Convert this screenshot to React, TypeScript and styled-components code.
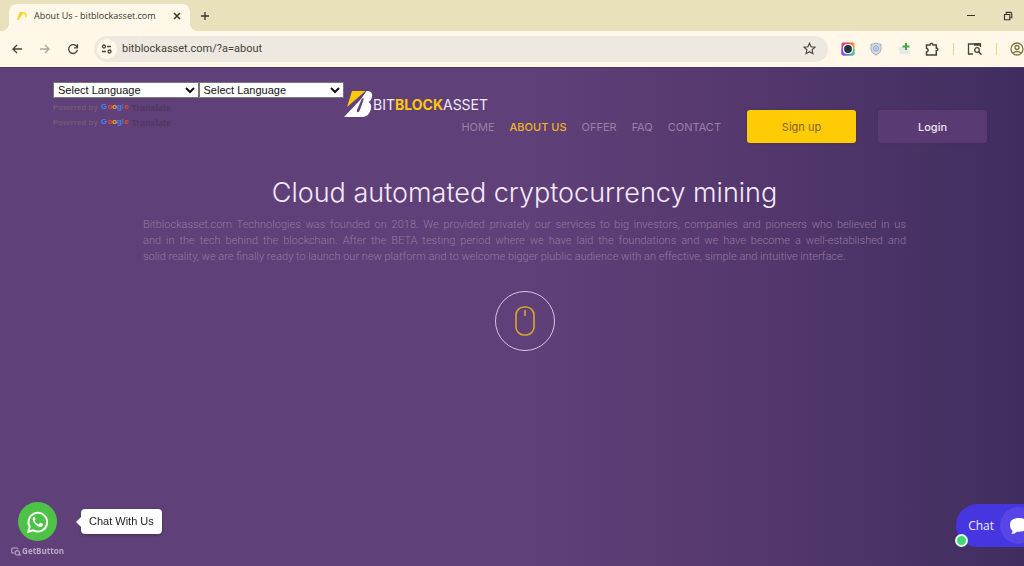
import React from "react";
import styled, { createGlobalStyle } from "styled-components";

const GlobalStyle = createGlobalStyle`
  *, *::before, *::after { box-sizing: border-box; }
  html, body, #root { height: 100%; }
  body { margin: 0; overflow: hidden; font-family: Inter, "Open Sans", sans-serif; }
  button { font: inherit; border: 0; padding: 0; background: none; color: inherit; cursor: pointer; }
  a { text-decoration: none; }
  h1, p { margin: 0; }
  svg { display: block; flex: none; }
`;

const Window = styled.div`
  min-height: 100%;
  display: flex;
  flex-direction: column;
`;

/* Browser chrome */
const TabStrip = styled.div`
  display: flex;
  align-items: flex-end;
  height: 31px;
  padding-left: 9px;
  background: #e9e1bb;
  color: #37352a;
  font-family: "Open Sans", sans-serif;
`;

const Tab = styled.div`
  position: relative;
  display: flex;
  align-items: center;
  width: 181px;
  height: 27px;
  padding: 0 9px 4px 8px;
  border-radius: 8px 8px 0 0;
  background: #fff8e8;
  font-size: 9px;

  &::before,
  &::after {
    content: "";
    position: absolute;
    bottom: 0;
    width: 8px;
    height: 8px;
  }
  &::before {
    left: -8px;
    background: radial-gradient(circle at 0 0, transparent 8px, #fff8e8 8px);
  }
  &::after {
    right: -8px;
    background: radial-gradient(circle at 100% 0, transparent 8px, #fff8e8 8px);
  }
`;

const TabTitle = styled.span`
  flex: 1;
  margin-left: 7px;
  white-space: nowrap;
`;

const NewTab = styled.button`
  margin: 0 auto 10px 10px;
`;

const WindowControls = styled.div`
  display: flex;
  gap: 27px;
  padding: 0 11px 10px 0;
`;

const Toolbar = styled.div`
  display: flex;
  align-items: center;
  height: 37px;
  padding: 0 0 1px 11px;
  border-bottom: 1px solid #4a3d5c;
  background: #fff8e8;
  color: #45433a;
  font-family: "Open Sans", sans-serif;
`;

const NavButtons = styled.div`
  display: flex;
  gap: 16px;
  margin-right: 15px;
`;

const AddressBar = styled.div`
  display: flex;
  flex: 1;
  align-items: center;
  height: 26px;
  padding: 0 12px 0 3px;
  border-radius: 13px;
  background: #ede8e0;
`;

const SiteInfo = styled.button`
  display: grid;
  place-items: center;
  width: 20px;
  height: 20px;
  border-radius: 50%;
  background: #fff8e8;
`;

const Address = styled.input`
  flex: 1;
  min-width: 0;
  padding: 0 0 0 5px;
  border: 0;
  outline: 0;
  background: none;
  color: #45433a;
  font: 11px Roboto, "Open Sans", sans-serif;
`;

const Extensions = styled.div`
  display: flex;
  align-items: center;
  gap: 14px;
  margin-left: 13px;
`;

const Divider = styled.span`
  width: 1px;
  height: 12px;
  margin-right: -1px;
  background: #e6d873;
`;

/* Site */
const Site = styled.div`
  flex: 1;
  background: linear-gradient(90deg, #5f4078 0%, #5f4078 52%, #56396f 70%, #463163 92%, #402d60 100%);
`;

const Header = styled.header`
  display: flex;
  padding: 14px 37px 0 53px;
`;

const Translate = styled.div`
  flex: none;
  width: 291px;
`;

const Selects = styled.div`
  display: flex;
  margin-bottom: 2px;
`;

const LanguageSelect = styled.select`
  flex: 1;
  min-width: 0;
  height: 16px;
  padding: 0;
  border: 1px solid #767676;
  border-radius: 0;
  background: #fff;
  color: #111;
  font: 11px "Liberation Sans", Arial, sans-serif;
`;

const Powered = styled.div`
  display: flex;
  align-items: center;
  gap: 3px;
  height: 15px;
  color: #745878;
  font: bold 8px "Liberation Sans", Arial, sans-serif;
`;

const Google = styled.span`
  margin-bottom: 2px;
`;

const Tint = styled.span<{ $c: string }>`
  color: ${(p) => p.$c};
`;

const TranslateWord = styled.span`
  color: #4e3960;
  font-size: 9px;
`;

const HeaderMain = styled.div`
  flex: 1;
  padding-top: 8px;
`;

const Logo = styled.a`
  display: flex;
  align-items: center;
  height: 28px;
  width: max-content;
  color: #f2eaf8;
  font-size: 14px;

  b { color: #ffc90a; font-weight: 700; }
`;

const Menu = styled.nav`
  display: flex;
  align-items: center;
  justify-content: flex-end;
  margin-top: -8px;
  white-space: nowrap;
`;

const MenuLink = styled.a<{ $active?: boolean }>`
  margin-right: 15px;
  color: ${(p) => (p.$active ? "#edb522" : "#9a80a6")};
  font-size: 11px;
  line-height: 16px;
  font-weight: ${(p) => (p.$active ? 500 : 400)};
`;

const ActionButton = styled.button<{ $primary?: boolean }>`
  width: 109px;
  height: 33px;
  margin-left: ${(p) => (p.$primary ? 11 : 22)}px;
  border-radius: 3px;
  background: ${(p) => (p.$primary ? "#ffcb05" : "#5a3a73")};
  color: ${(p) => (p.$primary ? "#80652a" : "#f0e6f5")};
  font-size: 11px;
  font-weight: ${(p) => (p.$primary ? 400 : 500)};
  box-shadow: 0 0 3px rgba(60, 30, 70, 0.3);
`;

const Hero = styled.main`
  display: flex;
  flex-direction: column;
  align-items: center;
  padding: 32px 118px 0 143px;
`;

const Title = styled.h1`
  color: #f4e9fa;
  font-size: 27px;
  font-weight: 300;
  line-height: 36px;
  white-space: nowrap;
`;

const Intro = styled.p`
  align-self: stretch;
  margin-top: 6px;
  color: #9478a1;
  font-family: Roboto, "Open Sans", sans-serif;
  font-size: 11px;
  font-weight: 300;
  line-height: 16px;
`;

const Line = styled.span<{ $last?: boolean }>`
  display: block;
  text-align: justify;
  text-align-last: ${(p) => (p.$last ? "left" : "justify")};
  white-space: nowrap;
`;

const ScrollHint = styled.button`
  display: grid;
  place-items: center;
  width: 60px;
  height: 60px;
  margin-top: 26px;
  border: 1px solid #d9c3e6;
  border-radius: 50%;
`;

/* Floating chat widgets */
const Messenger = styled.div`
  position: fixed;
  left: 12px;
  bottom: 9px;
  display: flex;
  align-items: flex-start;
  gap: 18px;
`;

const MessengerColumn = styled.div`
  display: flex;
  flex-direction: column;
  align-items: center;
  gap: 4px;
  width: 51px;
`;

const WhatsAppButton = styled.button`
  display: grid;
  place-items: center;
  width: 39px;
  height: 39px;
  border-radius: 50%;
  background: #4dc247;
`;

const Brand = styled.a`
  display: flex;
  align-items: center;
  gap: 1px;
  color: #bda9cb;
  font: bold 8px/12px "Open Sans", sans-serif;
`;

const Bubble = styled.div`
  position: relative;
  height: 25px;
  margin-top: 7px;
  padding: 0 8px;
  border-radius: 4px;
  background: #fff;
  color: #222;
  font: 11px/25px "Liberation Sans", Arial, sans-serif;
  box-shadow: 0 1px 3px rgba(0, 0, 0, 0.3);

  &::before {
    content: "";
    position: absolute;
    left: -5px;
    top: 8px;
    border: 5px solid transparent;
    border-left: 0;
    border-right-color: #fff;
  }
`;

const ChatButton = styled.button`
  position: fixed;
  right: -23px;
  bottom: 19px;
  display: flex;
  align-items: center;
  gap: 6px;
  height: 43px;
  padding: 0 10px 0 12px;
  border-radius: 22px;
  background: #4636e0;
  color: #f0edff;
  font: 12px "Open Sans", sans-serif;
`;

const ChatIcon = styled.span`
  display: grid;
  place-items: center;
  width: 37px;
  height: 37px;
  border-radius: 50%;
  background: #5745e6;
`;

const Online = styled.span`
  position: absolute;
  left: -1px;
  bottom: 0;
  width: 13px;
  height: 13px;
  border: 2px solid #e3f7ec;
  border-radius: 50%;
  background: #43d67b;
`;

const stroke = { fill: "none", stroke: "currentColor", strokeWidth: 1.3 } as const;

function PoweredBy() {
  return (
    <Powered>
      <span>Powered by</span>
      <Google>
        <Tint $c="#4285f4">G</Tint>
        <Tint $c="#ea4335">o</Tint>
        <Tint $c="#e8b020">o</Tint>
        <Tint $c="#4285f4">g</Tint>
        <Tint $c="#5a6f9e">l</Tint>
        <Tint $c="#ea4335">e</Tint>
      </Google>
      <TranslateWord>Translate</TranslateWord>
    </Powered>
  );
}

function Favicon() {
  return (
    <svg width="10" height="10" viewBox="0 0 10 10">
      <path d="M0 9 3 1h5q2 1 2 4l-2 2V4L6 3 2 9Z" fill="#f7df58" />
      <path d="m0 9 3-8h3L2 7Z" fill="#f5cf1e" />
    </svg>
  );
}

function BrowserChrome() {
  return (
    <>
      <TabStrip>
        <Tab>
          <Favicon />
          <TabTitle>About Us - bitblockasset.com</TabTitle>
          <button aria-label="Close tab">
            <svg width="8" height="8" viewBox="0 0 8 8" {...stroke} strokeWidth="1.5"><path d="m1 1 6 6M7 1 1 7" /></svg>
          </button>
        </Tab>
        <NewTab aria-label="New tab">
          <svg width="10" height="10" viewBox="0 0 10 10" {...stroke}><path d="M5 1v8M1 5h8" /></svg>
        </NewTab>
        <WindowControls>
          <button aria-label="Minimize">
            <svg width="10" height="10" viewBox="0 0 10 10" {...stroke} strokeWidth="1"><path d="M1 4.500h8" /></svg>
          </button>
          <button aria-label="Restore">
            <svg width="10" height="10" viewBox="0 0 10 10" {...stroke} strokeWidth="1.100">
              <path d="M1.500 3.500H6.800V8.800H1.500ZM3.300 3.300V1.400H7.200q1.600 0 1.600 1.600v3.700H7" />
            </svg>
          </button>
        </WindowControls>
      </TabStrip>
      <Toolbar>
        <NavButtons>
          <button aria-label="Back">
            <svg width="12" height="12" viewBox="0 0 12 12" {...stroke}><path d="M11 6H2M6 2 2 6l4 4" /></svg>
          </button>
          <button aria-label="Forward">
            <svg width="12" height="12" viewBox="0 0 12 12" {...stroke} stroke="#aaa79c"><path d="M1 6h9M6 2l4 4-4 4" /></svg>
          </button>
          <button aria-label="Reload">
            <svg width="12" height="12" viewBox="0 0 12 12" {...stroke}>
              <path d="M10 4A4.400 4.400 0 1 0 10.400 7" />
              <path d="M10.500 1.200v3.600H7" />
            </svg>
          </button>
        </NavButtons>
        <AddressBar>
          <SiteInfo aria-label="Site information">
            <svg width="12" height="10" viewBox="0 0 12 10" {...stroke}>
              <circle cx="3" cy="2.500" r="1.500" /><path d="M6 2.500h4M1 7.500h4" /><circle cx="8.500" cy="7.500" r="1.500" />
            </svg>
          </SiteInfo>
          <Address aria-label="Address" defaultValue="bitblockasset.com/?a=about" />
          <button aria-label="Bookmark this page">
            <svg width="13" height="13" viewBox="0 0 13 13" {...stroke} strokeWidth="1.100">
              <path d="m6.500 1.200 1.600 3.600 3.900.4-2.900 2.600.8 3.900-3.400-2-3.400 2 .8-3.900L1 5.200l3.900-.4Z" />
            </svg>
          </button>
        </AddressBar>
        <Extensions>
          <button aria-label="Camera extension">
            <svg width="14" height="14" viewBox="0 0 14 14">
              <defs>
                <linearGradient id="warm" x1="0" y1="0" x2="1" y2="0.3">
                  <stop stopColor="#d92f9c" /><stop offset=".5" stopColor="#ee4540" /><stop offset="1" stopColor="#f0a13a" />
                </linearGradient>
                <linearGradient id="cool" x1="0" y1="0" x2="1" y2="0">
                  <stop stopColor="#7a4df0" /><stop offset=".5" stopColor="#3f8df0" /><stop offset="1" stopColor="#3fcf9c" />
                </linearGradient>
              </defs>
              <rect x=".5" y=".5" width="13" height="13" rx="2" fill="url(#warm)" />
              <path d="M.5 7h13v4.500q0 2-2 2h-9q-2 0-2-2Z" fill="url(#cool)" />
              <rect x="2" y="2" width="10" height="10" rx="4" fill="#f4f1f4" />
              <circle cx="7" cy="7" r="3.900" fill="#25333d" />
            </svg>
          </button>
          <button aria-label="Shield extension">
            <svg width="14" height="14" viewBox="0 0 14 14">
              <path d="M7 1q2.500 1.300 5 1.300V7q0 4-5 6.200Q2 11 2 7V2.300Q4.500 2.300 7 1Z" fill="#d5dbe4" stroke="#a3aebc" />
              <circle cx="7" cy="6.500" r="2.600" fill="none" stroke="#8fa5d2" />
              <circle cx="7" cy="6.500" r="1" fill="#8fa5d2" />
            </svg>
          </button>
          <button aria-label="Add extension">
            <svg width="14" height="14" viewBox="0 0 14 14">
              <path d="M1 5h8l4 3v4H3Z" fill="#e5e9ea" />
              <path d="M9 1v7M5.500 4.500h7" stroke="#45a546" strokeWidth="2" />
            </svg>
          </button>
          <button aria-label="Extensions">
            <svg width="14" height="14" viewBox="0 0 14 14" {...stroke} strokeWidth="1.500">
              <path d="M1.500 3H5q0-1.800 1.500-1.800T8 3h3.300v3q1.500 0 1.500 1.300T11.300 8.600V13H1.500V10q1.600-.3 1.600-1.800T1.500 6.300Z" />
            </svg>
          </button>
          <Divider />
          <button aria-label="Search side panel">
            <svg width="15" height="14" viewBox="0 0 15 14" {...stroke}>
              <path d="M6 12H1.500V2h12v3" /><path d="M7 2.500h6.500" strokeWidth="2.500" /><circle cx="10" cy="8" r="2.300" /><path d="m11.700 9.700 2.800 3" />
            </svg>
          </button>
          <Divider />
          <button aria-label="Profile">
            <svg width="14" height="14" viewBox="0 0 14 14" {...stroke} stroke="#80733d">
              <circle cx="7" cy="7" r="6" /><circle cx="7" cy="5.500" r="2" /><path d="M3 11q4-3 8 0" />
            </svg>
          </button>
        </Extensions>
      </Toolbar>
    </>
  );
}

function LogoMark() {
  return (
    <svg width="29" height="28" viewBox="0 0 29 28">
      <path d="M8 1h13.500L3 17Z" fill="#ffc90a" />
      <path d="M22.500 1h2q4.500 1 3.500 6-1 4-3.500 5 3.500 2 2.500 7-2 7.500-8 8H0L17 9Z" fill="#fff" />
      <path d="M17.500 9.500 13 20q-.8 2.200.6 2.200t2.200-2L19.500 10q.5-2-.5-2Z" fill="#5f4078" />
    </svg>
  );
}

export default function App() {
  return (
    <Window>
      <GlobalStyle />
      <BrowserChrome />
      <Site>
        <Header>
          <Translate>
            <Selects>
              <LanguageSelect aria-label="Language"><option>Select Language</option></LanguageSelect>
              <LanguageSelect aria-label="Second language"><option>Select Language</option></LanguageSelect>
            </Selects>
            <PoweredBy />
            <PoweredBy />
          </Translate>
          <HeaderMain>
            <Logo href="#home">
              <LogoMark />
              <span>BIT<b>BLOCK</b>ASSET</span>
            </Logo>
            <Menu>
              <MenuLink href="#home">HOME</MenuLink>
              <MenuLink href="#about" $active>ABOUT US</MenuLink>
              <MenuLink href="#offer">OFFER</MenuLink>
              <MenuLink href="#faq">FAQ</MenuLink>
              <MenuLink href="#contact">CONTACT</MenuLink>
              <ActionButton $primary>Sign up</ActionButton>
              <ActionButton>Login</ActionButton>
            </Menu>
          </HeaderMain>
        </Header>
        <Hero>
          <Title>Cloud automated cryptocurrency mining</Title>
          <Intro>
            <Line>Bitblockasset.com Technologies was founded on 2018. We provided privately our services to big investors, companies and pioneers who believed in us</Line>
            <Line>and in the tech behind the blockchain. After the BETA testing period where we have laid the foundations and we have become a well-established and</Line>
            <Line $last>solid reality, we are finally ready to launch our new platform and to welcome bigger plublic audience with an effective, simple and intuitive interface.</Line>
          </Intro>
          <ScrollHint aria-label="Scroll down">
            <svg width="20" height="30" viewBox="0 0 20 30" fill="none" stroke="#d9a433" strokeWidth="1.600">
              <rect x="1" y="1" width="18" height="28" rx="8" /><path d="M10 4v6" />
            </svg>
          </ScrollHint>
        </Hero>
      </Site>
      <Messenger>
        <MessengerColumn>
          <WhatsAppButton aria-label="WhatsApp">
            <svg width="24" height="24" viewBox="0 0 24 24">
              <path d="M2.300 21.700 3.700 16.700A9.300 9.300 0 1 1 7.300 20.300Z" fill="none" stroke="#fff" strokeWidth="2" />
              <path d="M8.600 7q-.5-.5-1 0-2 2 .2 5.200 3 4.500 6.700 4.800 2.500-.3 2.700-2.400l-.2-.6-2.400-1.200q-.4-.1-.7.3l-1 1.200q-.3.2-.7 0-2.500-1.100-3.600-3.300-.1-.4.200-.7l.8-1v-.5L8.600 7Z" fill="#fff" />
            </svg>
          </WhatsAppButton>
          <Brand href="#getbutton">
            <svg width="10" height="9" viewBox="0 0 10 9" {...stroke} strokeWidth="1.100">
              <path d="M3.200 6H1.500Q.7 6 .7 5V2.200Q.7 1 2 1h3.800Q7 1 7 2.200" />
              <path d="M9.300 8H6.200a2.200 2.200 0 1 1 2-1.200Z" />
            </svg>
            GetButton
          </Brand>
        </MessengerColumn>
        <Bubble>Chat With Us</Bubble>
      </Messenger>
      <ChatButton>
        Chat
        <ChatIcon>
          <svg width="20" height="18" viewBox="0 0 20 18">
            <path d="M10 1C4.500 1 1 3 1 8q0 4 2.500 5.500Q3.500 16 2 17q4 0 6-2.300h2c5.500 0 9-2 9-6.700S15.500 1 10 1Z" fill="#fff" />
          </svg>
        </ChatIcon>
        <Online />
      </ChatButton>
    </Window>
  );
}
